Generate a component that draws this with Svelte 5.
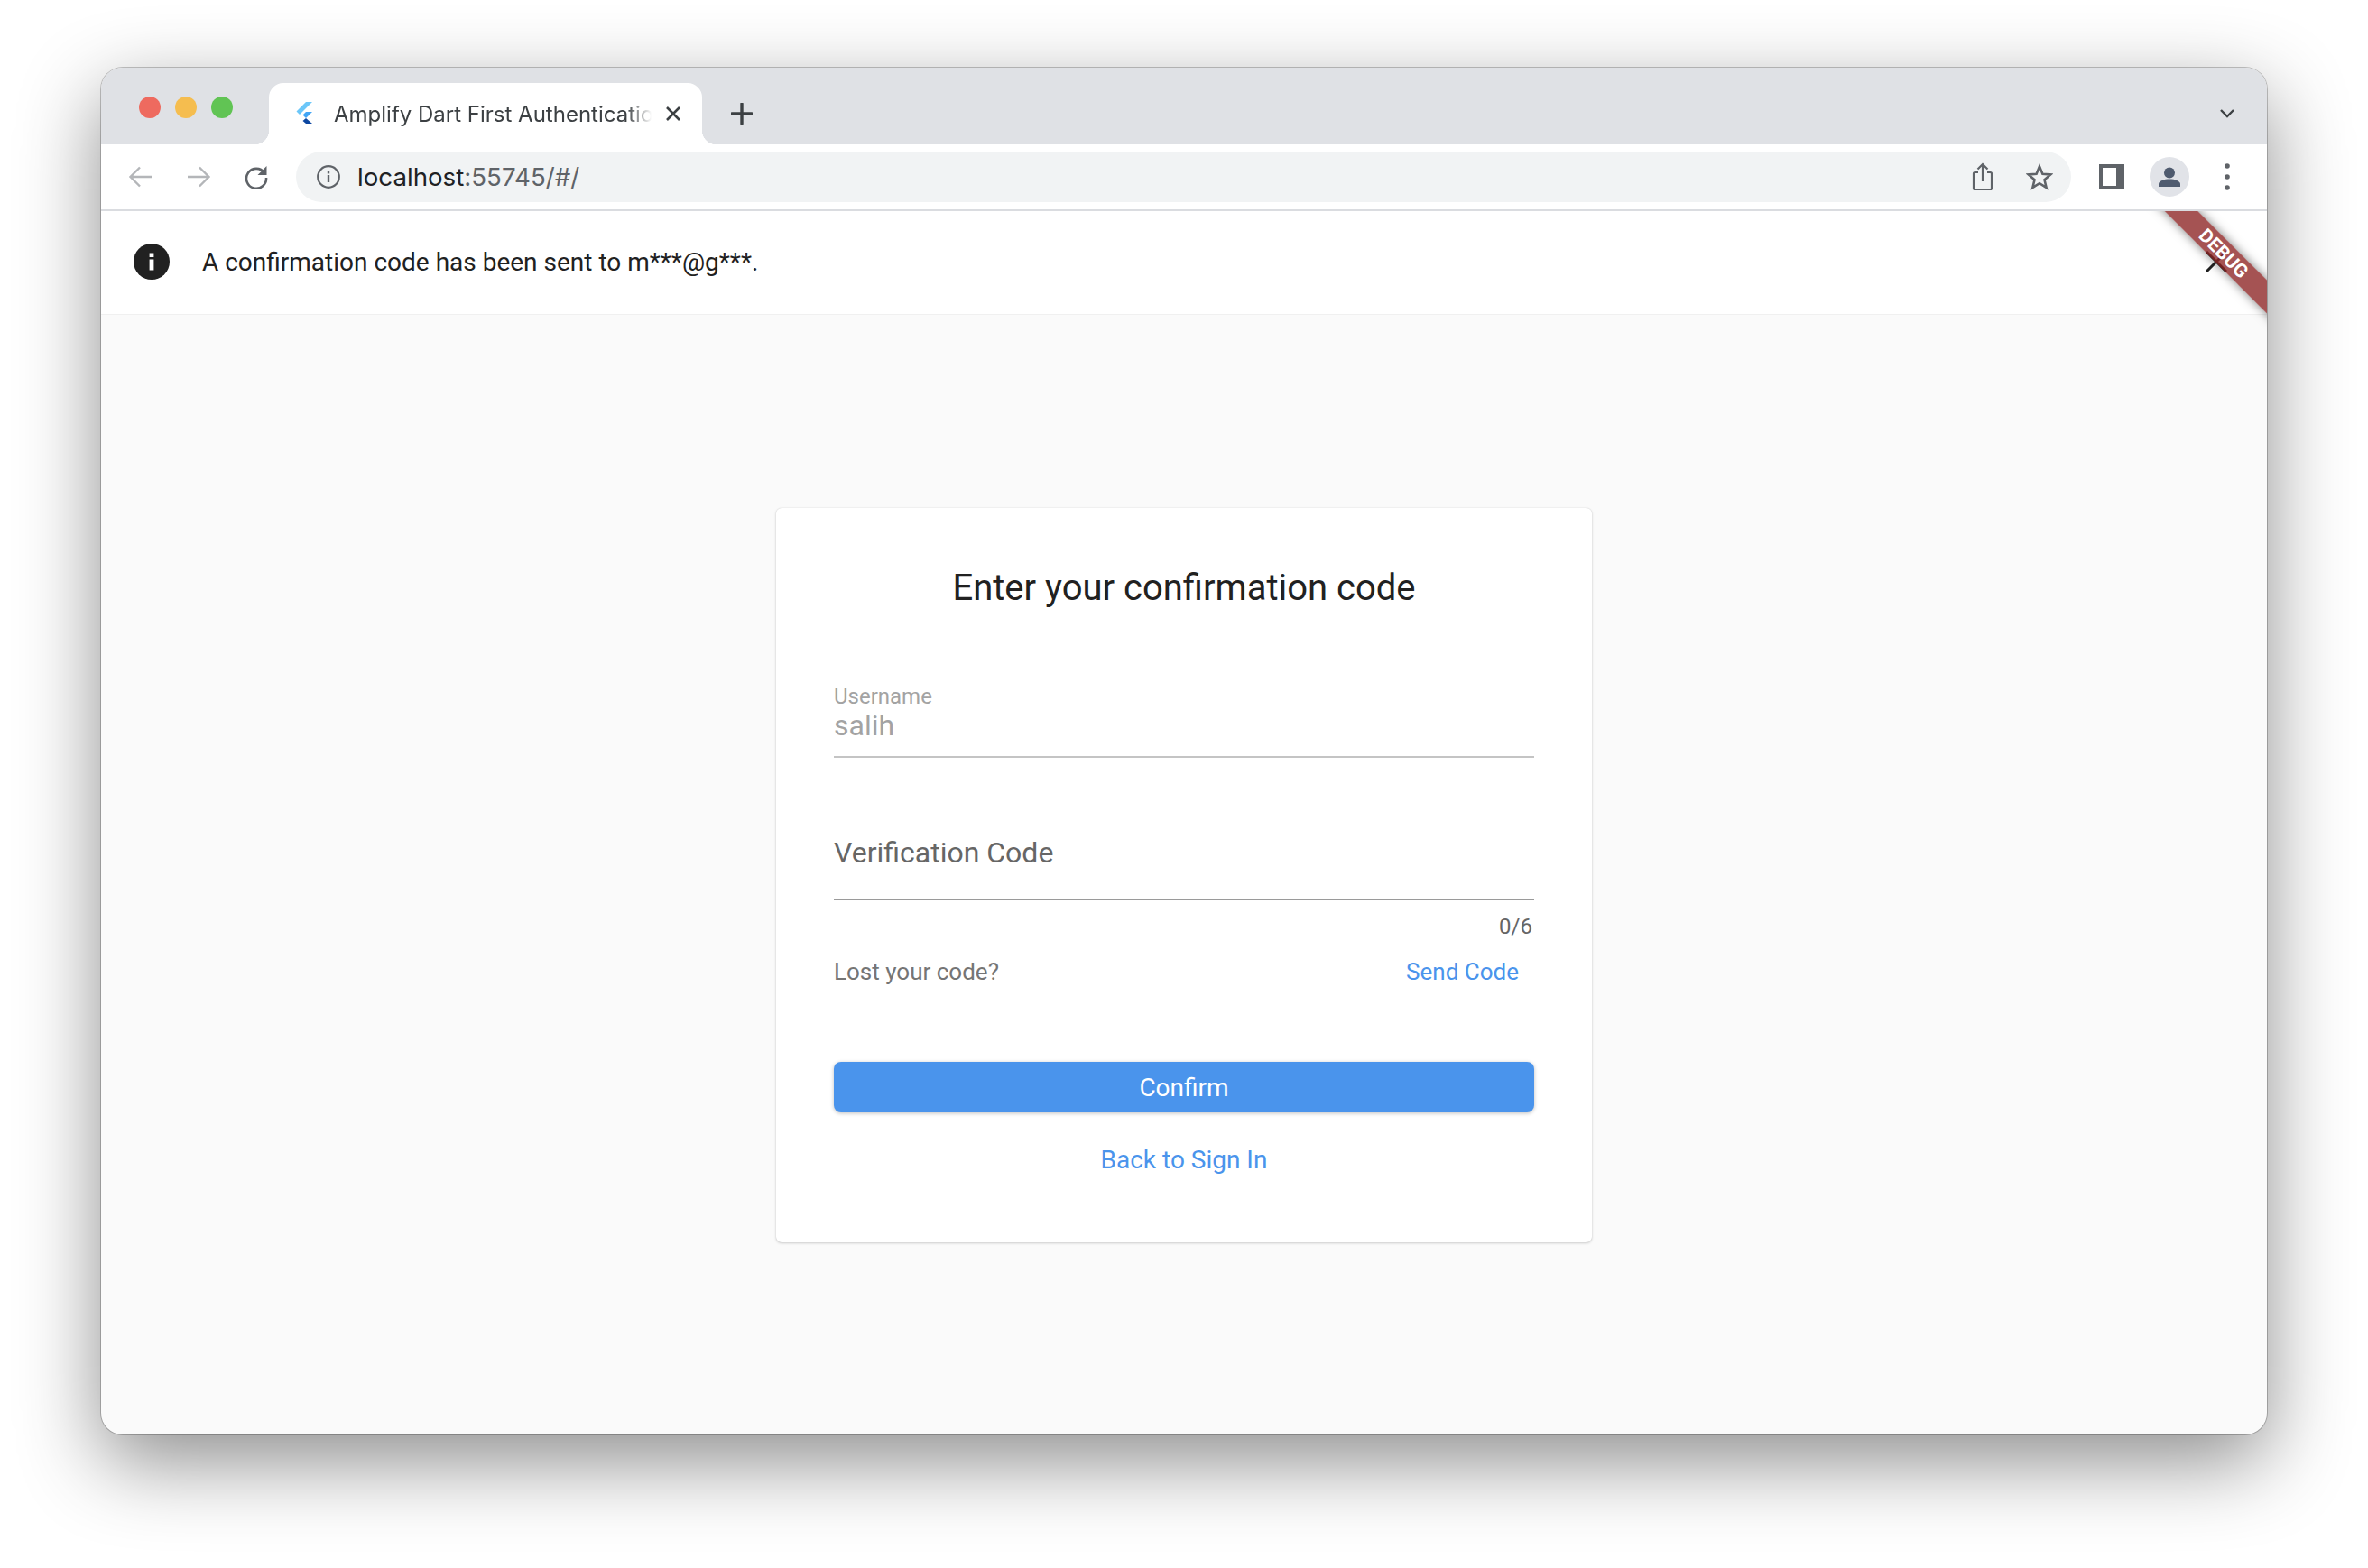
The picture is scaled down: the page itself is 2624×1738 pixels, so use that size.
<script>
	const title = "Amplify Dart First Authentication";
	const maskedEmail = "m***@g***";
	const code = "";
</script>

<div class="stage">
	<div class="window">
		<header class="tabstrip">
			<div class="lights">
				<span class="light red"></span>
				<span class="light yellow"></span>
				<span class="light green"></span>
			</div>
			<div class="tab">
				<svg class="favicon" viewBox="0 0 18 24" aria-hidden="true">
					<polygon points="11,0 18,0 4,14 0.5,10.5" fill="#6cc7f9" />
					<polygon points="11,11 18,11 11,18 7.5,14.5" fill="#42a5f5" />
					<polygon points="7.5,21 11,18 18,24 11,24" fill="#0d47a1" />
				</svg>
				<span class="tab-title">{title}</span>
				<svg class="tab-close" viewBox="0 0 18 16" aria-hidden="true">
					<path d="M2 1 16 15M16 1 2 15" stroke="#3c4043" stroke-width="2.6" fill="none" />
				</svg>
			</div>
			<svg class="new-tab" viewBox="0 0 24 24" aria-hidden="true">
				<path d="M12 1V23M1 12H23" stroke="#3c4043" stroke-width="3.4" fill="none" stroke-linecap="round" />
			</svg>
			<svg class="tab-list" viewBox="0 0 18 12" aria-hidden="true">
				<path d="M2 2 9 9 16 2" stroke="#3c4043" stroke-width="2.4" fill="none" />
			</svg>
		</header>

		<nav class="toolbar">
			<svg class="tool" viewBox="0 0 28 28" aria-hidden="true">
				<path d="M26 14H3M13 3.5 2.5 14 13 24.5" stroke="#b4b6b9" stroke-width="2.4" fill="none" />
			</svg>
			<svg class="tool" viewBox="0 0 28 28" aria-hidden="true">
				<path d="M2 14H25M15 3.5 25.5 14 15 24.5" stroke="#b4b6b9" stroke-width="2.4" fill="none" />
			</svg>
			<svg class="tool" viewBox="0 0 28 28" aria-hidden="true">
				<path d="M23 9.5A11 11 0 1 0 25 15" stroke="#5f6368" stroke-width="2.6" fill="none" />
				<polygon points="25.5,2 25.5,12 15.5,12" fill="#5f6368" />
			</svg>
			<div class="omnibox">
				<svg class="site-info" viewBox="0 0 26 26" aria-hidden="true">
					<circle cx="13" cy="13" r="11.8" stroke="#5f6368" stroke-width="2.2" fill="none" />
					<rect x="11.8" y="11" width="2.4" height="8" fill="#5f6368" />
					<rect x="11.8" y="7" width="2.4" height="2.4" fill="#5f6368" />
				</svg>
				<span class="url"><b>localhost</b>:55745/#/</span>
				<svg class="share" viewBox="0 0 24 32" aria-hidden="true">
					<path d="M7 11H3.5A1.5 1.5 0 0 0 2 12.5V28.5A1.5 1.5 0 0 0 3.5 30H20.5A1.5 1.5 0 0 0 22 28.5V12.5A1.5 1.5 0 0 0 20.5 11H17" stroke="#5f6368" stroke-width="2.2" fill="none" />
					<path d="M12 21V2M6.5 7.5 12 2 17.5 7.5" stroke="#5f6368" stroke-width="2.2" fill="none" />
				</svg>
				<svg class="star" viewBox="0 0 30 30" aria-hidden="true">
					<path d="M15 3.5 18.4 11.7 27.3 12.4 20.5 18.2 22.6 26.9 15 22.2 7.4 26.9 9.5 18.2 2.7 12.4 11.6 11.7Z" stroke="#5f6368" stroke-width="2.6" fill="none" />
				</svg>
			</div>
			<div class="side-panel"></div>
			<div class="avatar">
				<svg viewBox="0 0 44 44" aria-hidden="true">
					<circle cx="22" cy="17.5" r="6" fill="#4f5b6f" />
					<path d="M10 33V30C10 26.5 16 24.5 22 24.5S34 26.5 34 30V33Z" fill="#4f5b6f" />
				</svg>
			</div>
			<svg class="kebab" viewBox="0 0 6 30" aria-hidden="true">
				<circle cx="3" cy="3" r="2.8" fill="#5f6368" />
				<circle cx="3" cy="15" r="2.8" fill="#5f6368" />
				<circle cx="3" cy="27" r="2.8" fill="#5f6368" />
			</svg>
		</nav>

		<main class="app">
			<div class="ribbon"><span>DEBUG</span></div>
			<section class="notice">
				<svg class="notice-icon" viewBox="0 0 40 40" aria-hidden="true">
					<circle cx="20" cy="20" r="20" fill="#212121" />
					<rect x="17.6" y="17.5" width="4.8" height="12" fill="#fff" />
					<rect x="17.6" y="10.5" width="4.8" height="4.5" fill="#fff" />
				</svg>
				<p>A confirmation code has been sent to {maskedEmail}.</p>
				<svg class="notice-close" viewBox="0 0 24 24" aria-hidden="true">
					<path d="M1 1 23 23M23 1 1 23" stroke="#212121" stroke-width="3" fill="none" />
				</svg>
			</section>

			<div class="center">
				<form class="card">
					<h1>Enter your confirmation code</h1>

					<div class="field readonly">
						<label for="username">Username</label>
						<div id="username" class="value">salih</div>
					</div>

					<div class="field code">
						<div class="placeholder">Verification Code</div>
					</div>
					<div class="counter">{code.length}/6</div>

					<div class="resend">
						<span>Lost your code?</span>
						<a href="#/">Send Code</a>
					</div>

					<button type="button" class="confirm">Confirm</button>
					<a class="back" href="#/">Back to Sign In</a>
				</form>
			</div>
		</main>
	</div>
</div>

<style>
	:global(body) {
		margin: 0;
		background: #fff;
	}

	.stage {
		box-sizing: border-box;
		width: 2624px;
		height: 1738px;
		padding: 75px 112px 148px;
		overflow: hidden;
	}

	.window {
		display: flex;
		flex-direction: column;
		height: 100%;
		border-radius: 24px;
		overflow: hidden;
		background: #fafafa;
		box-shadow: 0 0 0 1px rgba(0, 0, 0, 0.22), 0 30px 90px rgba(0, 0, 0, 0.45);
	}

	.tabstrip {
		display: flex;
		align-items: flex-end;
		height: 85px;
		flex: none;
		background: #dfe1e5;
	}

	.lights {
		display: flex;
		gap: 16px;
		align-self: flex-start;
		margin: 32px 0 0 42px;
	}

	.light {
		width: 24px;
		height: 24px;
		border-radius: 50%;
	}

	.red {
		background: #ee6a5f;
	}

	.yellow {
		background: #f5bd4f;
	}

	.green {
		background: #61c454;
	}

	.tab {
		position: relative;
		display: flex;
		align-items: center;
		box-sizing: border-box;
		width: 480px;
		height: 68px;
		margin-left: 40px;
		padding: 0 23px 0 30px;
		border-radius: 16px 16px 0 0;
		background: #fff;
	}

	.tab::before,
	.tab::after {
		content: "";
		position: absolute;
		bottom: 0;
		width: 16px;
		height: 16px;
	}

	.tab::before {
		left: -16px;
		background: radial-gradient(circle at 0 0, transparent 16px, #fff 16.5px);
	}

	.tab::after {
		right: -16px;
		background: radial-gradient(circle at 100% 0, transparent 16px, #fff 16.5px);
	}

	.favicon {
		width: 18px;
		height: 24px;
		flex: none;
		margin-top: -2px;
	}

	.tab-title {
		flex: 1;
		min-width: 0;
		margin: 0 15px 0 24px;
		overflow: hidden;
		white-space: nowrap;
		color: #3c4043;
		font: 24px "Inter", sans-serif;
		-webkit-mask-image: linear-gradient(to right, #000 calc(100% - 28px), transparent);
		mask-image: linear-gradient(to right, #000 calc(100% - 28px), transparent);
	}

	.tab-close {
		width: 18px;
		height: 16px;
		flex: none;
	}

	.new-tab {
		width: 24px;
		height: 24px;
		margin: 0 0 22px 32px;
	}

	.tab-list {
		width: 18px;
		height: 12px;
		margin: 0 35px 28px auto;
	}

	.toolbar {
		display: flex;
		align-items: center;
		box-sizing: border-box;
		height: 74px;
		flex: none;
		padding: 0 0 0 30px;
		background: #fff;
		border-bottom: 2px solid #dadce0;
	}

	.tool {
		width: 28px;
		height: 28px;
		margin-right: 36px;
	}

	.omnibox {
		display: flex;
		align-items: center;
		box-sizing: border-box;
		width: 1967px;
		height: 56px;
		margin-left: -6px;
		padding: 0 23px 0 23px;
		border-radius: 28px;
		background: #f1f3f4;
	}

	.site-info {
		width: 26px;
		height: 26px;
		flex: none;
	}

	.url {
		margin-left: 19px;
		color: #5f6368;
		font: 27.7px "Inter", sans-serif;
	}

	.url b {
		color: #202124;
		font-weight: 400;
	}

	.share {
		width: 24px;
		height: 32px;
		margin-left: auto;
	}

	.star {
		width: 30px;
		height: 30px;
		margin-left: 36px;
		margin-right: -3px;
	}

	.side-panel {
		box-sizing: border-box;
		width: 28px;
		height: 28px;
		margin-left: 31px;
		border: 4px solid #5f6368;
		border-right-width: 9px;
		background: #fff;
	}

	.avatar {
		width: 44px;
		height: 44px;
		margin-left: 28px;
		border-radius: 50%;
		background: #e1e3e8;
	}

	.avatar svg {
		display: block;
	}

	.kebab {
		width: 6px;
		height: 30px;
		margin-left: 39px;
	}

	.app {
		position: relative;
		display: flex;
		flex: 1;
		flex-direction: column;
		min-height: 0;
		overflow: hidden;
		font-family: "Roboto", sans-serif;
	}

	.ribbon {
		position: absolute;
		top: 34px;
		right: -52px;
		z-index: 2;
		display: flex;
		align-items: center;
		justify-content: center;
		width: 200px;
		height: 26px;
		transform: rotate(45deg);
		background: rgba(140, 35, 35, 0.78);
		box-shadow: 0 0 12px rgba(0, 0, 0, 0.5);
		color: #fff;
		font-size: 21px;
		font-weight: 700;
	}

	.notice {
		display: flex;
		align-items: center;
		box-sizing: border-box;
		height: 115px;
		flex: none;
		padding: 0 44px 2px 36px;
		background: #fff;
		border-bottom: 1px solid #f0f0f0;
	}

	.notice-icon {
		width: 40px;
		height: 40px;
		flex: none;
	}

	.notice p {
		margin: 0 0 0 36px;
		color: #212121;
		font-size: 28px;
	}

	.notice-close {
		width: 24px;
		height: 24px;
		margin-left: auto;
	}

	.center {
		display: flex;
		flex: 1;
		justify-content: center;
		padding-top: 214px;
	}

	.card {
		display: flex;
		flex-direction: column;
		box-sizing: border-box;
		width: 904px;
		height: 814px;
		padding: 0 64px;
		border-radius: 6px;
		background: #fff;
		box-shadow: 0 1px 3px rgba(0, 0, 0, 0.18), 0 0 1px rgba(0, 0, 0, 0.18);
	}

	h1 {
		margin: 62px 0 0;
		color: #212121;
		font-size: 40px;
		font-weight: 400;
		line-height: 54px;
		text-align: center;
	}

	.field {
		box-sizing: border-box;
		border-bottom: 2px solid #c4c4c4;
	}

	.readonly {
		height: 82px;
		margin-top: 79px;
	}

	.readonly label {
		display: block;
		color: #a3a3a3;
		font-size: 24px;
		line-height: 28px;
	}

	.value {
		color: #a3a3a3;
		font-size: 32px;
		line-height: 36px;
	}

	.code {
		display: flex;
		align-items: flex-end;
		height: 158px;
		padding-bottom: 32px;
		border-bottom-color: #9a9a9a;
	}

	.placeholder {
		color: #666;
		font-size: 32px;
		line-height: 38px;
	}

	.counter {
		margin-top: 15px;
		padding-right: 2px;
		color: #666;
		font-size: 24px;
		line-height: 28px;
		text-align: right;
	}

	.resend {
		display: flex;
		align-items: center;
		justify-content: space-between;
		margin-top: 19px;
		padding-right: 17px;
		color: #757575;
		font-size: 26px;
		line-height: 34px;
	}

	a {
		color: #4a94ec;
		text-decoration: none;
	}

	.confirm {
		height: 56px;
		margin-top: 83px;
		padding: 0;
		border: 0;
		border-radius: 8px;
		background: #4a94ec;
		box-shadow: 0 1px 4px rgba(0, 0, 0, 0.25);
		color: #fff;
		font: 28px "Roboto", sans-serif;
	}

	.back {
		margin-top: 35px;
		font-size: 28px;
		line-height: 36px;
		text-align: center;
	}
</style>
